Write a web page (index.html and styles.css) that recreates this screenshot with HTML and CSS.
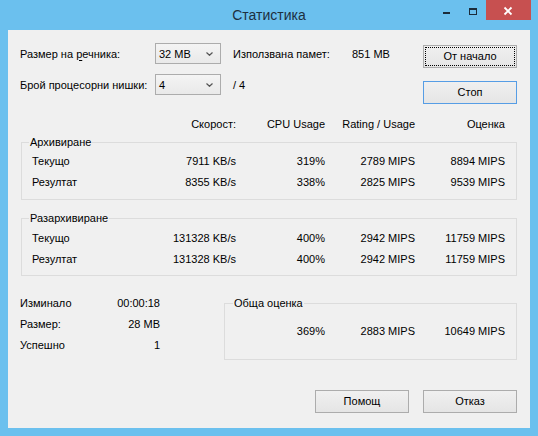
FILE: index.html
```html
<!DOCTYPE html>
<html lang="bg">
<head>
<meta charset="utf-8">
<title>Статистика</title>
<link rel="stylesheet" href="styles.css">
</head>
<body>
<div class="window">
  <div class="titlebar">
    <div></div>
    <div class="title">Статистика</div>
    <div class="caps">
      <div class="cap"><svg width="26" height="20" viewBox="0 0 26 20"><rect x="9" y="12" width="7" height="2" fill="#1c2c3a"/></svg></div>
      <div class="cap"><svg width="26" height="20" viewBox="0 0 26 20"><rect x="9.5" y="8.5" width="7" height="6" fill="none" stroke="#1c2c3a" stroke-width="1"/><rect x="9" y="8" width="8" height="2" fill="#1c2c3a"/></svg></div>
      <div class="cap close"><svg width="45" height="20" viewBox="0 0 45 20"><path d="M18.5 7.5 L25.5 14.5 M25.5 7.5 L18.5 14.5" stroke="#fff" stroke-width="1.8" fill="none"/></svg></div>
    </div>
  </div>
  <div class="client">
    <div class="top">
      <div class="params">
        <div class="lbl">Размер на <u>р</u>ечника:</div>
        <div class="combo"><span>32 MB</span><svg class="chev" width="7" height="4" viewBox="0 0 7 4"><path d="M0.5 0.5 L3.5 3.3 L6.5 0.5" stroke="#555" stroke-width="1.2" fill="none"/></svg></div>
        <div class="lbl third">Използвана памет:</div>
        <div class="lbl">851 MB</div>
        <div class="lbl">Брой процесорни нишки:</div>
        <div class="combo"><span>4</span><svg class="chev" width="7" height="4" viewBox="0 0 7 4"><path d="M0.5 0.5 L3.5 3.3 L6.5 0.5" stroke="#555" stroke-width="1.2" fill="none"/></svg></div>
        <div class="lbl third">/ 4</div>
        <div></div>
      </div>
      <div class="actions">
        <button class="btn focused">От начало</button>
        <button class="btn default">Стоп</button>
      </div>
    </div>

    <div class="row head">
      <span></span><span class="num">Скорост:</span><span class="num">CPU Usage</span><span class="num">Rating / Usage</span><span class="num">Оценка</span>
    </div>

    <div class="group g1">
      <div class="legend">Архивиране</div>
      <div class="row"><span>Текущо</span><span class="num">7911 KB/s</span><span class="num">319%</span><span class="num">2789 MIPS</span><span class="num">8894 MIPS</span></div>
      <div class="row"><span>Резултат</span><span class="num">8355 KB/s</span><span class="num">338%</span><span class="num">2825 MIPS</span><span class="num">9539 MIPS</span></div>
    </div>

    <div class="group g2">
      <div class="legend">Разархивиране</div>
      <div class="row"><span>Текущо</span><span class="num">131328 KB/s</span><span class="num">400%</span><span class="num">2942 MIPS</span><span class="num">11759 MIPS</span></div>
      <div class="row"><span>Резултат</span><span class="num">131328 KB/s</span><span class="num">400%</span><span class="num">2942 MIPS</span><span class="num">11759 MIPS</span></div>
    </div>

    <div class="bottom">
      <div class="stats">
        <span>Изминало</span><span class="num">00:00:18</span>
        <span>Размер:</span><span class="num">28 MB</span>
        <span>Успешно</span><span class="num">1</span>
      </div>
      <div class="group g3">
        <div class="legend">Обща оценка</div>
        <div class="total"><span class="num">369%</span><span class="num">2883 MIPS</span><span class="num">10649 MIPS</span></div>
      </div>
    </div>

    <div class="footer">
      <button class="btn">Помощ</button>
      <button class="btn">Отказ</button>
    </div>
  </div>
</div>
</body>
</html>
```

FILE: styles.css
```css
html, body {
  margin: 0;
  padding: 0;
}
body {
  width: 538px;
  height: 436px;
  overflow: hidden;
  background: #6bc0ee;
  font-family: "Liberation Sans", Arial, sans-serif;
  font-size: 11px;
  color: #000;
}
.window {
  display: flex;
  flex-direction: column;
  height: 436px;
}
.titlebar {
  height: 30px;
  display: grid;
  grid-template-columns: 1fr auto 1fr;
}
.title {
  align-self: center;
  font-size: 14px;
  color: #1d2f3e;
  line-height: 18px;
  margin-top: -1px;
}
.caps {
  justify-self: end;
  align-self: start;
  display: flex;
  margin-right: 7px;
}
.cap {
  width: 26px;
  height: 20px;
}
.cap svg {
  display: block;
}
.cap.close {
  width: 45px;
  background: #c75050;
}
.client {
  flex: 1;
  margin: 0 8px 8px;
  background: #f0f0f0;
}
.top {
  display: flex;
  padding: 13px 0 0 12px;
}
.params {
  flex: 1;
  display: grid;
  grid-template-columns: 135px 66px 131px 1fr;
  grid-auto-rows: 21px;
  row-gap: 10px;
  align-items: center;
  align-content: start;
}
.lbl {
  white-space: nowrap;
}
.lbl u {
  text-decoration-thickness: 1px;
  text-underline-offset: 2px;
}
.third {
  padding-left: 12px;
}
.combo {
  box-sizing: border-box;
  height: 21px;
  border: 1px solid #acacac;
  background: linear-gradient(#f4f4f4, #e9e9e9);
  display: flex;
  align-items: center;
  padding-left: 3px;
}
.chev {
  margin-left: auto;
  margin-right: 7px;
}
.actions {
  display: flex;
  flex-direction: column;
  gap: 13px;
  margin: 2px 13px 0 0;
}
.btn {
  box-sizing: border-box;
  width: 94px;
  height: 23px;
  padding: 0;
  border: 1px solid #acacac;
  background: linear-gradient(#f0f0f0, #e5e5e5);
  font: inherit;
  color: #000;
  line-height: 19px;
}
.btn.focused {
  outline: 1px dotted #000;
  outline-offset: -3px;
}
.btn.default {
  border-color: #569de5;
}
.row {
  display: grid;
  grid-template-columns: 104px 100px 89px 90px 90px;
  padding-left: 10px;
  height: 21px;
  line-height: 21px;
  white-space: nowrap;
}
.num {
  text-align: right;
}
.row.head {
  margin: 13px 0 0 14px;
  height: 15px;
  line-height: 15px;
}
.group {
  border: 1px solid #dcdcdc;
}
.legend {
  width: max-content;
  height: 14px;
  line-height: 14px;
  margin: -8px 0 0 7px;
  padding: 0 1px;
  background: #f0f0f0;
}
.g1 {
  margin: 10px 13px 0;
  padding-bottom: 6px;
}
.g1 .legend + .row {
  margin-top: 2px;
}
.g2 {
  margin: 18px 13px 0;
  padding-bottom: 5px;
}
.g2 .legend + .row {
  margin-top: 3px;
}
.bottom {
  display: flex;
  align-items: flex-start;
  margin-top: 17px;
  padding-left: 12px;
}
.stats {
  display: grid;
  grid-template-columns: 80px 60px;
  grid-auto-rows: 21px;
  line-height: 21px;
  white-space: nowrap;
}
.g3 {
  flex: 1;
  margin: 10px 13px 0 64px;
  padding-bottom: 17px;
}
.g3 .legend {
  margin-left: 8px;
}
.total {
  display: grid;
  grid-template-columns: 100px 90px 90px;
  margin-top: 11px;
  height: 21px;
  line-height: 21px;
  white-space: nowrap;
}
.footer {
  display: flex;
  justify-content: flex-end;
  gap: 14px;
  margin: 30px 13px 0 0;
}
```
